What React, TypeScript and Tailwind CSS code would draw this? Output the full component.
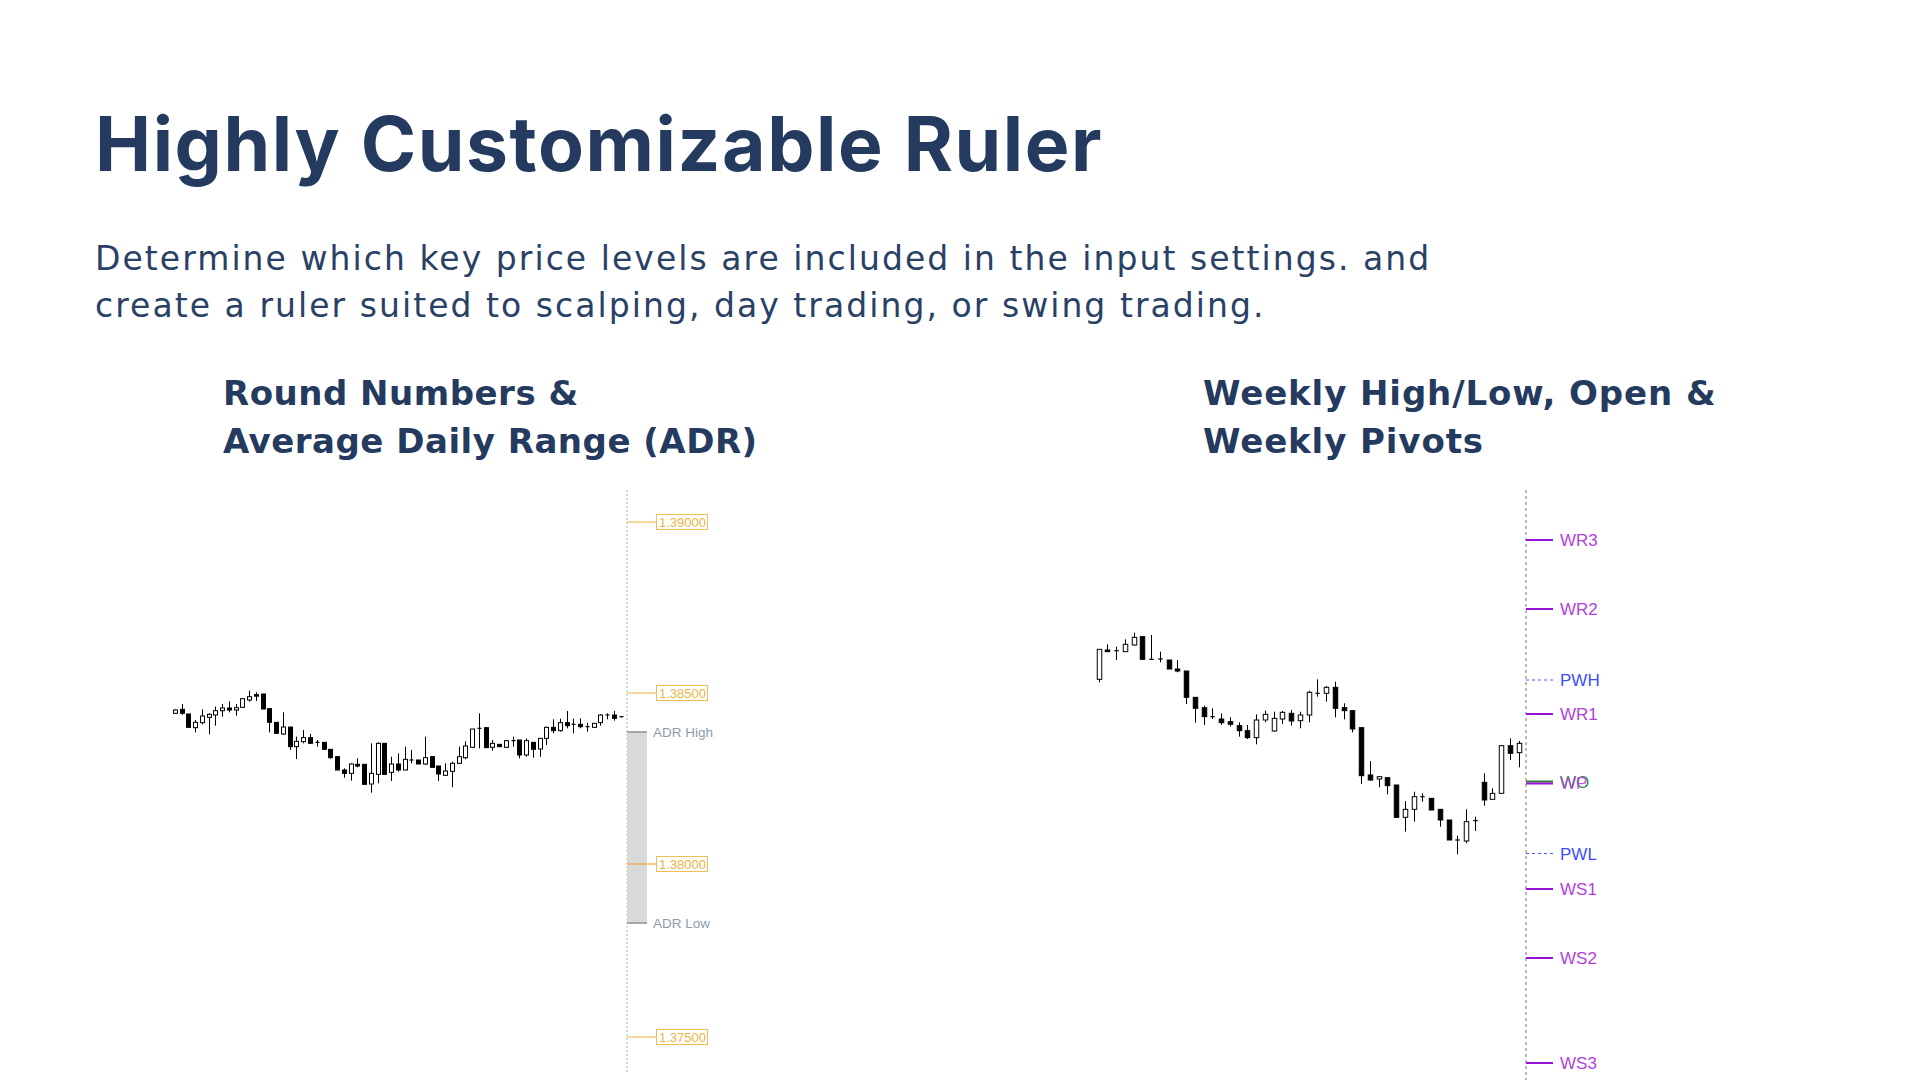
import React from 'react';

// candle rows: [bodyTop, bodyBottom, wickTop, wickBottom, kind] in 3x zoom units
// kind: 0 = up (hollow), 1 = down (filled), 2 = doji
type Candle = [number, number, number, number, number];

const leftCandles: Candle[] = [
    [690, 700, 688, 700, 0], [688, 700, 672, 705, 1], [702, 742, 702, 742, 1], [727, 743, 720, 757, 0],
    [708, 728, 688, 733, 0], [703, 712, 700, 763, 0], [692, 705, 680, 737, 0], [684, 692, 672, 710, 0],
    [684, 690, 664, 697, 1], [683, 690, 672, 707, 0], [656, 682, 656, 682, 0], [650, 660, 632, 665, 0],
    [644, 648, 637, 663, 1], [642, 687, 642, 687, 1], [686, 727, 686, 757, 1], [727, 760, 727, 760, 1],
    [741, 762, 697, 765, 0], [741, 800, 741, 810, 1], [784, 800, 770, 837, 0], [773, 785, 750, 790, 0],
    [773, 790, 762, 792, 1], [787, 787, 780, 800, 2], [787, 808, 787, 808, 1], [808, 833, 808, 836, 1],
    [830, 870, 830, 870, 1], [870, 880, 865, 893, 1], [852, 880, 850, 902, 0], [853, 858, 835, 862, 1],
    [853, 913, 853, 913, 1], [880, 912, 790, 938, 0], [790, 883, 787, 910, 0], [790, 883, 790, 883, 1],
    [852, 877, 830, 903, 0], [852, 870, 820, 875, 1], [838, 870, 800, 870, 0], [840, 840, 810, 850, 2],
    [840, 852, 840, 852, 1], [833, 852, 770, 855, 0], [830, 862, 830, 862, 1], [858, 882, 858, 903, 1],
    [873, 886, 850, 888, 0], [850, 874, 845, 922, 0], [830, 850, 800, 852, 0], [798, 833, 784, 838, 0],
    [747, 802, 747, 802, 0], [745, 745, 700, 805, 2], [743, 803, 743, 803, 1], [790, 802, 780, 812, 0],
    [793, 800, 793, 800, 1], [782, 802, 782, 802, 0], [782, 782, 770, 800, 2], [780, 825, 780, 835, 1],
    [782, 825, 775, 830, 0], [787, 808, 787, 833, 1], [775, 807, 775, 830, 0], [742, 775, 740, 795, 0],
    [742, 752, 718, 760, 1], [728, 752, 716, 755, 0], [728, 737, 693, 745, 1], [733, 733, 716, 760, 2],
    [733, 740, 715, 745, 1], [740, 740, 728, 755, 2], [730, 742, 730, 742, 0], [705, 728, 703, 737, 0],
    [705, 705, 700, 718, 2], [705, 715, 693, 722, 1], [710, 710, 708, 712, 2],
];

const rightCandles: Candle[] = [
    [508, 598, 508, 607, 0], [510, 515, 493, 515, 1], [512, 512, 500, 540, 2], [493, 515, 478, 515, 0],
    [472, 495, 458, 497, 0], [470, 538, 470, 538, 1], [538, 538, 465, 540, 2], [537, 537, 515, 547, 2],
    [540, 567, 540, 567, 1], [567, 573, 540, 577, 1], [573, 652, 573, 672, 1], [652, 685, 652, 728, 1],
    [683, 710, 677, 735, 1], [710, 710, 685, 717, 2], [717, 728, 700, 735, 1], [725, 733, 712, 740, 1],
    [737, 752, 727, 770, 1], [752, 773, 735, 777, 1], [720, 773, 703, 793, 0], [703, 720, 692, 727, 0],
    [715, 753, 695, 755, 0], [697, 717, 693, 732, 0], [700, 723, 690, 737, 1], [705, 722, 695, 745, 0],
    [637, 705, 632, 727, 0], [640, 640, 598, 650, 2], [622, 640, 618, 665, 0], [622, 685, 605, 712, 1],
    [683, 692, 670, 718, 1], [692, 747, 692, 757, 1], [743, 887, 743, 912, 1], [885, 900, 843, 903, 1],
    [890, 897, 890, 922, 0], [893, 917, 893, 943, 1], [915, 1012, 915, 1012, 1], [988, 1012, 963, 1055, 0],
    [950, 988, 935, 1025, 0], [950, 950, 940, 965, 2], [955, 990, 955, 990, 1], [988, 1020, 988, 1040, 1],
    [1020, 1080, 1020, 1080, 1], [1080, 1080, 1067, 1123, 2], [1025, 1083, 988, 1090, 0], [1022, 1022, 1010, 1053, 2],
    [907, 960, 880, 977, 1], [940, 958, 925, 958, 0], [797, 940, 797, 940, 0], [797, 820, 775, 840, 1],
    [790, 818, 783, 862, 0],
];

function Candles({ data, x0, step, body }: { data: Candle[]; x0: number; step: number; body: number }) {
    return (
        <g>
            {data.map(([bt, bb, wt, wb, kind], i) => {
                const x = Math.round(x0 + i * step) + 0.5;
                const top = bt / 3;
                const bottom = bb / 3;
                return (
                    <g key={i}>
                        <line x1={x} x2={x} y1={wt / 3} y2={wb / 3} stroke="#000" strokeWidth={1} />
                        {kind === 2 ? (
                            <line x1={x - body / 2} x2={x + body / 2} y1={top} y2={top} stroke="#000" strokeWidth={1.2} />
                        ) : (
                            <rect
                                x={x - body / 2}
                                y={top}
                                width={body}
                                height={Math.max(bottom - top, 1.5)}
                                fill={kind === 1 ? '#000' : '#fff'}
                                stroke="#000"
                                strokeWidth={1}
                            />
                        )}
                    </g>
                );
            })}
        </g>
    );
}

function RoundLevel({ y, label, lineColor }: { y: number; label: string; lineColor: string }) {
    return (
        <g>
            <line x1={477} x2={506} y1={y} y2={y} stroke={lineColor} strokeWidth={1.2} />
            <rect x={506.5} y={y - 7.5} width={51} height={15} fill="#fff" stroke="#efbf55" strokeWidth={1} />
            <text x={509} y={y + 5} fontSize={13} fill="#e9b545" fontFamily="'Liberation Sans', Arial, sans-serif">
                {label}
            </text>
        </g>
    );
}

function RoundNumbersChart() {
    return (
        <svg width={600} height={600} viewBox="0 0 600 600" className="block">
            <line x1={477} x2={477} y1={10} y2={592} stroke="#b4b4b4" strokeWidth={1} strokeDasharray="2 2" />
            <rect x={477} y={252} width={20} height={191} fill="#d9d9d9" />
            <line x1={477} x2={497} y1={252} y2={252} stroke="#a3a8ae" strokeWidth={2} />
            <line x1={477} x2={497} y1={443} y2={443} stroke="#a3a8ae" strokeWidth={2} />
            <text x={503} y={256.5} fontSize={13.5} fill="#8d9cab" fontFamily="'Liberation Sans', Arial, sans-serif">
                ADR High
            </text>
            <text x={503} y={447.5} fontSize={13.5} fill="#8d9cab" fontFamily="'Liberation Sans', Arial, sans-serif">
                ADR Low
            </text>
            <RoundLevel y={42} label="1.39000" lineColor="#efc05a" />
            <RoundLevel y={213} label="1.38500" lineColor="#efc05a" />
            <RoundLevel y={384} label="1.38000" lineColor="#f3a33a" />
            <RoundLevel y={557} label="1.37500" lineColor="#efc05a" />
            <Candles data={leftCandles} x0={24.9} step={6.755} body={4} />
        </svg>
    );
}

const pivotLevels = [
    { y: 60, label: 'WR3' },
    { y: 129, label: 'WR2' },
    { y: 234, label: 'WR1' },
    { y: 409, label: 'WS1' },
    { y: 478, label: 'WS2' },
    { y: 583, label: 'WS3' },
];

function PivotsChart() {
    const font = "'Liberation Sans', Arial, sans-serif";
    return (
        <svg width={600} height={600} viewBox="0 0 600 600" className="block">
            <line x1={446} x2={446} y1={10} y2={600} stroke="#a8a8a8" strokeWidth={1.6} strokeDasharray="3 3" />
            {pivotLevels.map(l => (
                <g key={l.label}>
                    <line x1={446} x2={473} y1={l.y} y2={l.y} stroke="#9612d6" strokeWidth={2} />
                    <text x={480} y={l.y + 6} fontSize={17} fill="#b03fe0" fontFamily={font}>
                        {l.label}
                    </text>
                </g>
            ))}
            {/* previous week high / low */}
            <line x1={446} x2={473} y1={200} y2={200} stroke="#4a5bff" strokeWidth={1.2} strokeDasharray="3 3" />
            <text x={480} y={206} fontSize={17} fill="#3c4dff" fontFamily={font}>PWH</text>
            <line x1={446} x2={473} y1={373.5} y2={373.5} stroke="#4a5bff" strokeWidth={1.2} strokeDasharray="3 3" />
            <text x={480} y={379.5} fontSize={17} fill="#3c4dff" fontFamily={font}>PWL</text>
            {/* weekly open + pivot overlap */}
            <line x1={446} x2={473} y1={301.5} y2={301.5} stroke="#2e7d32" strokeWidth={2} />
            <line x1={446} x2={473} y1={303.5} y2={303.5} stroke="#9612d6" strokeWidth={2} />
            <text x={480} y={308} fontSize={17} fill="#3a8a4a" fontFamily={font}>WO</text>
            <text x={480} y={308.5} fontSize={17} fill="#b03fe0" fillOpacity={0.85} fontFamily={font}>WP</text>
            <Candles data={rightCandles} x0={18.6} step={8.75} body={4.5} />
        </svg>
    );
}

export default function App() {
    return (
        <div className="w-[1920px] h-[1080px] overflow-hidden bg-white text-[#243a5e] font-['Inter','Open_Sans',sans-serif]">
            <h1 className="ml-[95px] pt-[99px] text-[75px] leading-[90px] font-bold tracking-[1.6px] whitespace-nowrap">
                Highly Customizable Ruler
            </h1>
            <p className="ml-[95px] mt-[46px] text-[33px] leading-[47px] font-normal tracking-[2.05px] whitespace-nowrap text-[#2a4166] font-['DejaVu_Sans',sans-serif]">
                Determine which key price levels are included in the input settings. and
                <br />
                create a ruler suited to scalping, day trading, or swing trading.
            </p>
            <div className="flex mt-[40px]">
                <div className="ml-[150px] w-[600px] shrink-0">
                    <h2 className="ml-[73px] text-[34px] leading-[48px] font-bold tracking-[0.5px] whitespace-nowrap font-['DejaVu_Sans',sans-serif]">
                        Round Numbers &amp;
                        <br />
                        Average Daily Range (ADR)
                    </h2>
                    <div className="mt-[15px]">
                        <RoundNumbersChart />
                    </div>
                </div>
                <div className="ml-[330px] w-[600px] shrink-0">
                    <h2 className="ml-[123px] text-[34px] leading-[48px] font-bold tracking-[0.9px] whitespace-nowrap font-['DejaVu_Sans',sans-serif]">
                        Weekly High/Low, Open &amp;
                        <br />
                        Weekly Pivots
                    </h2>
                    <div className="mt-[15px]">
                        <PivotsChart />
                    </div>
                </div>
            </div>
        </div>
    );
}
